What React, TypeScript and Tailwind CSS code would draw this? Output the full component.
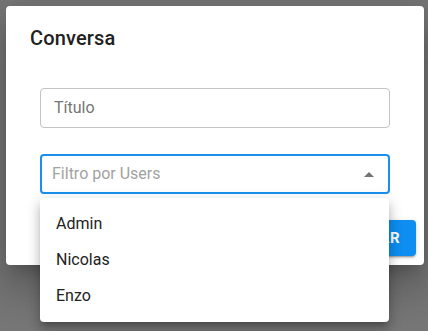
import React from "react";

export default function App() {
  const font = { fontFamily: "Roboto, 'Liberation Sans', sans-serif" };
  return (
    <div className="relative w-[428px] h-[331px] bg-[#767676] overflow-hidden p-[6px]" style={font}>
      <div className="w-[418px] h-[259px] bg-white rounded-[4px] shadow-[0_11px_15px_-7px_rgba(0,0,0,0.2),0_24px_38px_3px_rgba(0,0,0,0.14),0_9px_46px_8px_rgba(0,0,0,0.12)] flex flex-col">
        <div className="px-[24px] pt-[16px] h-[54px] flex items-start">
          <h2 className="text-[20px] leading-[32px] font-medium text-[#212121] tracking-[0.15px]">Conversa</h2>
        </div>
        <div className="px-[34px] pt-[28px] flex flex-col gap-[26px]">
          <div className="h-[40px] border border-[#c4c4c4] rounded-[4px] flex items-center px-[13px]">
            <span className="text-[16px] text-[#767676]">Título</span>
          </div>
          <div className="h-[40px] border-2 border-[#1a8fee] rounded-[4px] flex items-center pl-[10px] pr-[14px] justify-between">
            <span className="text-[16px] text-[#a2a2a2]">Filtro por Users</span>
            <svg width="10" height="5" viewBox="0 0 10 5"><polygon points="0,5 5,0 10,5" fill="#737373" /></svg>
          </div>
        </div>
        <div className="flex justify-end px-[8px] mt-[26px]">
          <button className="h-[36px] px-[16px] rounded-[4px] bg-[#0d8ef0] text-white text-[15px] font-bold tracking-[0.5px] shadow-[0_3px_1px_-2px_rgba(0,0,0,0.2),0_2px_2px_0_rgba(0,0,0,0.14),0_1px_5px_0_rgba(0,0,0,0.12)]">
            CRIAR
          </button>
        </div>
      </div>
      <div className="absolute left-[40px] top-[198px] w-[349px] bg-white rounded-[4px] py-[8px] shadow-[0_5px_5px_-3px_rgba(0,0,0,0.2),0_8px_10px_1px_rgba(0,0,0,0.14),0_3px_14px_2px_rgba(0,0,0,0.12)]">
        {["Admin", "Nicolas", "Enzo"].map((n) => (
          <div key={n} className="h-[36px] flex items-center px-[16px] text-[16px] text-[#222222]">{n}</div>
        ))}
      </div>
    </div>
  );
}
